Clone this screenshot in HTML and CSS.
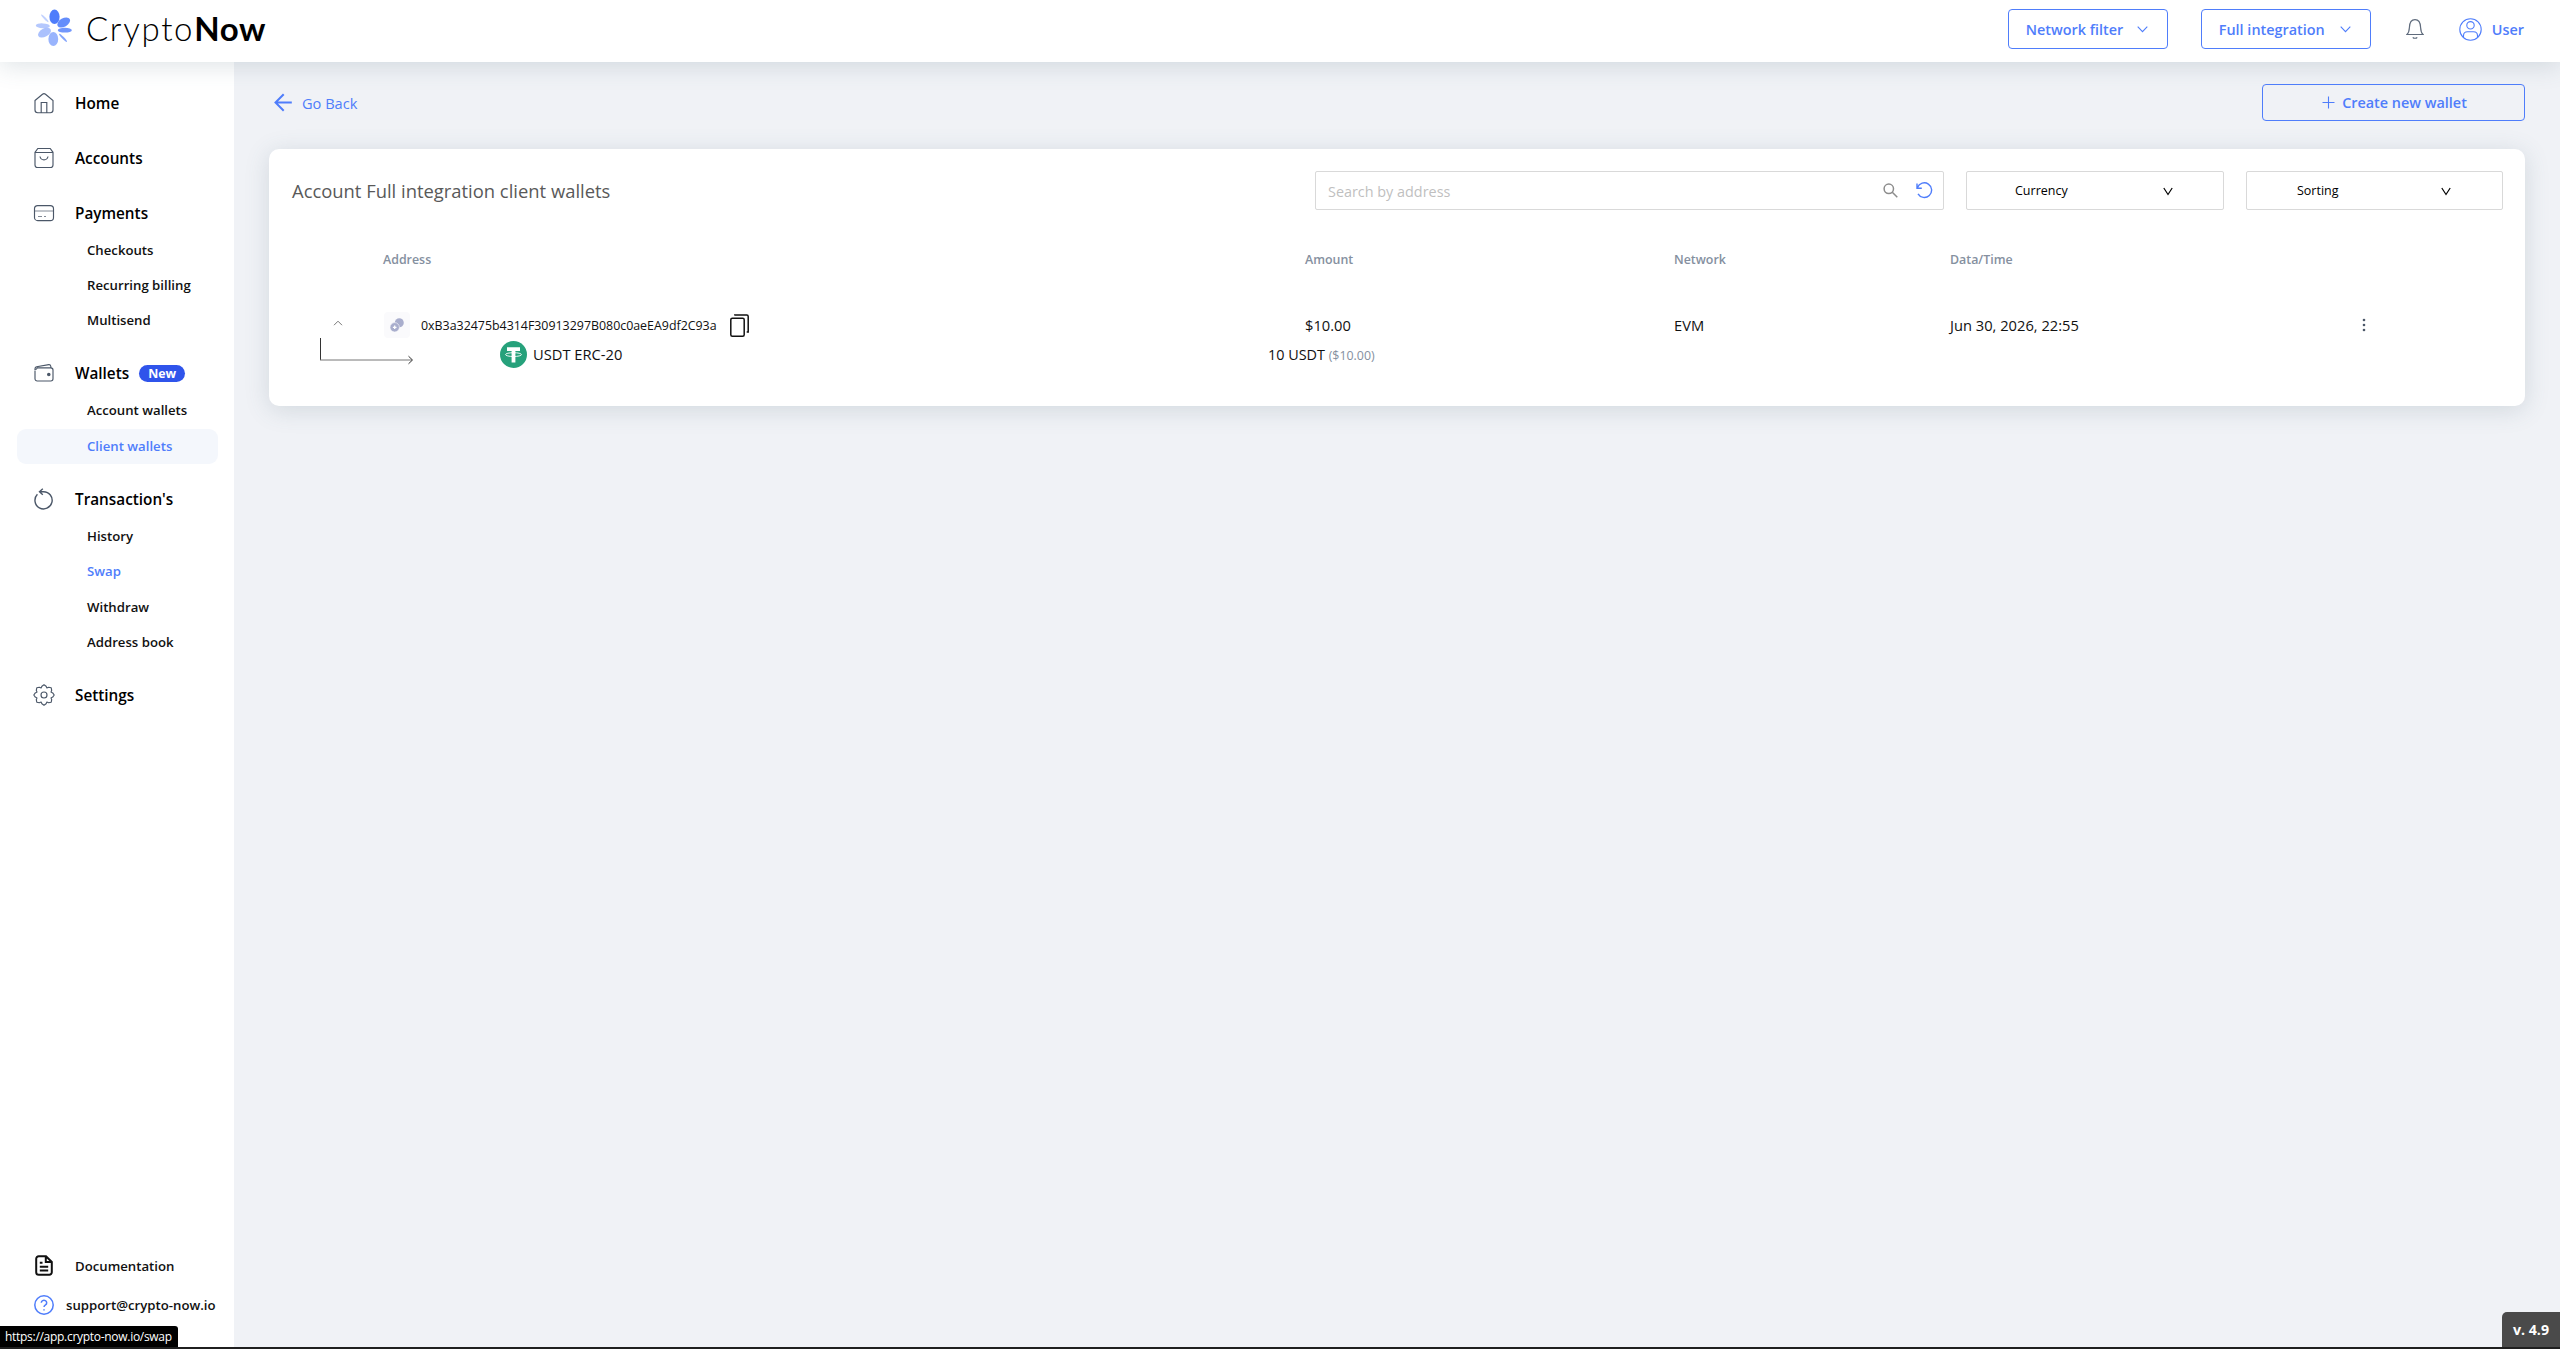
FILE: index.html
```
<!DOCTYPE html>
<html lang="en">
<head>
  <meta charset="UTF-8" />
  <meta name="viewport" content="width=device-width, initial-scale=1.0"/>
  <title>CryptoNow - Client wallets</title>
  <link rel="stylesheet" href="styles.css">
</head>
<body>
  <header class="header">
    <a class="logo" href="#">
      <svg class="logo-icon" width="38" height="38" viewBox="0 0 38 38">
        <g fill="#4f7dfb">
          <ellipse cx="19.5" cy="7.8" rx="5.1" ry="7.2"/>
          <ellipse cx="28.7" cy="13.5" rx="7" ry="4.2" transform="rotate(-30 28.7 13.5)" opacity=".88"/>
          <ellipse cx="29.8" cy="21.2" rx="7" ry="2.4" opacity=".8"/>
          <ellipse cx="28" cy="28.8" rx="5.6" ry="1" transform="rotate(46 28 28.8)" opacity=".7"/>
          <ellipse cx="18.3" cy="30" rx="4.9" ry="7.1" opacity=".58"/>
          <ellipse cx="9.5" cy="23.7" rx="7" ry="4.1" transform="rotate(-28 9.5 23.7)" opacity=".48"/>
          <ellipse cx="7.8" cy="16.8" rx="7" ry="2.4" transform="rotate(3 7.8 16.8)" opacity=".42"/>
          <ellipse cx="9.8" cy="9.3" rx="5.2" ry="1" transform="rotate(46 9.8 9.3)" opacity=".35"/>
        </g>
      </svg>
      <span class="logo-text">Crypto<b>Now</b></span>
    </a>
    <div class="header-actions">
      <button class="btn network-filter">Network filter
        <svg width="11" height="7" viewBox="0 0 11 7"><path d="M.7.7 5.5 5.6 10.3.7"/></svg>
      </button>
      <button class="btn integration">Full integration
        <svg width="11" height="7" viewBox="0 0 11 7"><path d="M.7.7 5.5 5.6 10.3.7"/></svg>
      </button>
      <svg class="bell" width="18" height="21" viewBox="0 0 18 21">
        <path d="M1 15.5c1.8-1.7 2.2-3.2 2.4-7C3.6 3.3 5.6.7 9 .7s5.4 2.6 5.6 7.8c.2 3.8.6 5.3 2.4 7zM6.800 18.300a2.400 1.600 0 0 0 4.400 0"/>
      </svg>
      <a class="user" href="#">
        <svg width="23" height="23" viewBox="0 0 23 23">
          <circle cx="11.5" cy="11.5" r="10.7"/>
          <circle cx="11.5" cy="7.3" r="3.7"/>
          <path d="M4.5 19.3v-1.500c0-2.400 1.700-4 4-4h6c2.300 0 4 1.600 4 4v1.500"/>
        </svg>
        User
      </a>
    </div>
  </header>

  <div class="layout">
    <aside class="sidebar">
      <nav class="menu">
        <a class="menu-item" href="#">
          <svg width="22" height="22" viewBox="0 0 22 22"><path d="M2 8.500 9.500 2.200a2.300 2.300 0 0 1 3 0L20 8.500V18a2.700 2.700 0 0 1-2.700 2.700H4.700A2.700 2.700 0 0 1 2 18zM8.200 20.500v-10h5.600v10"/></svg>
          Home
        </a>
        <a class="menu-item" href="#">
          <svg width="22" height="22" viewBox="0 0 22 22"><path d="M2 5.300 4.800 1.500h12.400L20 5.300V18a2.500 2.500 0 0 1-2.500 2.500h-13A2.500 2.500 0 0 1 2 18zM2 5.500h18M7 9.500c.5 2.300 2 3.300 4 3.300s3.500-1 4-3.300"/></svg>
          Accounts
        </a>
        <a class="menu-item" href="#">
          <svg width="22" height="22" viewBox="0 0 22 22"><rect x="1.5" y="3.6" width="19" height="15" rx="3.2"/><path d="M1.500 9h19" opacity=".6"/><path d="M5 14.500h4m2 0h2" opacity=".7"/></svg>
          Payments
        </a>
        <a class="sub-item" href="#">Checkouts</a>
        <a class="sub-item" href="#">Recurring billing</a>
        <a class="sub-item" href="#">Multisend</a>
        <a class="menu-item" href="#">
          <svg width="22" height="22" viewBox="0 0 22 22"><path d="M2 8.500v8.300a2.200 2.200 0 0 0 2.200 2.200h13.600a2.200 2.200 0 0 0 2.200-2.200V8a2.200 2.200 0 0 0-2.200-2.200H4.200A2.200 2.200 0 0 1 2 7.500v-.8c0-1 .6-1.700 1.600-1.900L15.800 2.600c1-.1 1.700.3 1.900 1.400l.3 1.700"/><circle cx="15.8" cy="12.5" r="1.2" fill="#4b5768"/></svg>
          Wallets
          <span class="badge">New</span>
        </a>
        <a class="sub-item" href="#">Account wallets</a>
        <a class="sub-item current" href="#">Client wallets</a>
        <a class="menu-item" href="#">
          <svg width="22" height="22" viewBox="0 0 22 22"><path d="M4.400 6.300A8.600 8.600 0 1 0 10.500 3.700H6.800M9.800.8 6.500 3.700l3.300 3" stroke-width="1.4"/></svg>
          Transaction's
        </a>
        <a class="sub-item" href="#">History</a>
        <a class="sub-item hovered" href="#">Swap</a>
        <a class="sub-item" href="#">Withdraw</a>
        <a class="sub-item" href="#">Address book</a>
        <a class="menu-item" href="#">
          <svg width="22" height="22" viewBox="0 0 22 22"><path d="M11 .8 13.100 2.300 13.900 4 15.700 3.300 18.200 3.800 18.700 6.300 18 8.100 19.700 8.900 21.200 11 19.700 13.100 18 13.900 18.700 15.700 18.200 18.200 15.700 18.700 13.900 18 13.100 19.700 11 21.200 8.900 19.700 8.100 18 6.300 18.700 3.800 18.200 3.300 15.700 4 13.900 2.300 13.100.8 11 2.300 8.900 4 8.100 3.300 6.300 3.800 3.800 6.300 3.300 8.100 4 8.900 2.300z" stroke-linejoin="round"/><circle cx="11" cy="11" r="3"/></svg>
          Settings
        </a>
      </nav>
      <div class="sidebar-footer">
        <a class="docs" href="#">
          <svg width="18" height="21" viewBox="0 0 18 21"><path d="M11 1.200H3.700A2.500 2.500 0 0 0 1.200 3.700v13.600a2.500 2.500 0 0 0 2.500 2.500h10.600a2.500 2.500 0 0 0 2.500-2.500V7zM10.800 1.500V7h5.700M4.800 7.800h2.700M4.800 11.700h8.400M4.800 15.500h8.400"/></svg>
          Documentation
        </a>
        <a class="support" href="#">
          <svg width="20" height="20" viewBox="0 0 20 20"><circle cx="10" cy="10" r="9.2"/><path d="M7.300 7.700a2.700 2.500 0 1 1 4.200 2.200c-1 .6-1.500 1-1.500 2.100M10 14.200v1.200"/></svg>
          support@crypto-now.io
        </a>
      </div>
    </aside>

    <main class="content">
      <div class="toolbar">
        <a class="go-back" href="#">
          <svg width="19" height="19" viewBox="0 0 19 19"><path d="M9.700 1.200 1.500 9.500l8.200 8.300M1.500 9.500h16.300"/></svg>
          Go Back
        </a>
        <button class="btn create-wallet">
          <svg width="13" height="13" viewBox="0 0 13 13"><path d="M6.500.5v12M.5 6.500h12"/></svg>
          Create new wallet
        </button>
      </div>

      <section class="card">
        <div class="card-head">
          <h1>Account Full integration client wallets</h1>
          <div class="search">
            <input type="text" placeholder="Search by address" />
            <svg class="magnifier" width="15" height="15" viewBox="0 0 15 15"><circle cx="5.8" cy="5.8" r="4.7"/><path d="m9.300 9.300 5 5"/></svg>
            <svg class="reset" width="18" height="17" viewBox="0 0 18 17"><path d="M1.500 5.500A7.300 7.300 0 1 1 2 11.800M1 1.500v4.700h4.800"/></svg>
          </div>
          <div class="select currency">Currency
            <svg width="10" height="9" viewBox="0 0 10 9"><path d="M.8 1 5 7.500 9.200 1"/></svg>
          </div>
          <div class="select sorting">Sorting
            <svg width="10" height="9" viewBox="0 0 10 9"><path d="M.8 1 5 7.500 9.200 1"/></svg>
          </div>
        </div>

        <div class="row table-head">
          <span class="col-address">Address</span>
          <span>Amount</span>
          <span>Network</span>
          <span>Data/Time</span>
        </div>

        <div class="row wallet">
          <svg class="caret" width="10" height="6" viewBox="0 0 10 6"><path d="M1 5.200 5 1.200l4 4"/></svg>
          <div class="address">
            <span class="link">
              <svg width="14" height="14" viewBox="0 0 14 14">
                <circle cx="9.3" cy="4.7" r="4.5" fill="#a9aecd"/>
                <circle cx="4.7" cy="9.3" r="4.7" fill="#a9aecd" stroke="#fafafc" stroke-width=".6"/>
                <path d="M4.700 7.500v3.600M2.900 9.300h3.600" stroke="#fff" stroke-width="1.3"/>
              </svg>
            </span>
            <span class="hash">0xB3a32475b4314F30913297B080c0aeEA9df2C93a</span>
            <svg class="copy" width="19" height="23" viewBox="0 0 19 23"><rect x=".8" y="4.3" width="13.4" height="17.9" rx="1.5"/><path d="M4.800 1.500V1h12a1.400 1.400 0 0 1 1.400 1.400v15.500h-1.500"/></svg>
          </div>
          <span>$10.00</span>
          <span>EVM</span>
          <span>Jun 30, 2026, 22:55</span>
          <svg class="dots" width="4" height="14" viewBox="0 0 4 14"><circle cx="2" cy="2" r="1.3"/><circle cx="2" cy="7" r="1.3"/><circle cx="2" cy="12" r="1.3"/></svg>
        </div>

        <div class="token">
          <svg class="elbow" width="95" height="27" viewBox="0 0 95 27">
            <path d="M1.500 0v22" stroke="#333"/>
            <path d="M1 22h92" stroke="#777"/>
            <path d="m89.500 18.200 4 3.800-4 3.800" stroke="#333"/>
          </svg>
          <div class="token-name">
            <svg width="27" height="27" viewBox="0 0 27 27">
              <circle cx="13.5" cy="13.5" r="13.5" fill="#26a17b"/>
              <path fill="#fff" d="M7 6.300h13v3.600h-4.600v11.600h-3.800V9.900H7z"/>
              <ellipse cx="13.5" cy="13.6" rx="8" ry="1.9" fill="none" stroke="#fff" stroke-width=".9"/>
            </svg>
            USDT ERC-20
          </div>
          <div class="token-amount">10 USDT <small>($10.00)</small></div>
        </div>
      </section>
    </main>
  </div>

  <div class="status-url">https://app.crypto-now.io/swap</div>
  <div class="version">v. 4.9</div>
  <div class="bottom-edge"></div>
</body>
</html>
```
FILE: styles.css
```
:root {
  --blue: #4f7dfb;
  --icon: #4b5768;
  --bg: #f0f2f6;
  --border: #d9d9d9;
  --shadow: 0 4px 24px rgba(70, 100, 115, 0.18);
}

* {
  box-sizing: border-box;
}

html, body {
  height: 100%;
  margin: 0;
  overflow: hidden;
}
body {
  display: flex;
  flex-direction: column;
  font-family: "Open Sans", "Noto Sans", sans-serif;
  font-size: 14.7px;
  color: #111;
  background: var(--bg);
}
a {
  color: inherit;
  text-decoration: none;
}
svg {
  display: block;
  flex: none;
  fill: none;
  stroke: currentColor;
}

/* Header */
.header {
  position: relative;
  z-index: 2;
  flex: none;
  display: flex;
  justify-content: space-between;
  height: 62px;
  padding: 0 36px 0 35px;
  background: #fff;
  box-shadow: var(--shadow);
}
.logo {
  display: flex;
  align-items: flex-start;
  gap: 13px;
  color: #000;
}
.logo-icon {
  margin-top: 9px;
  stroke: none;
}
.logo-text {
  margin-top: 8px;
  font: 300 33px/40px Lato, sans-serif;
  letter-spacing: 1.7px;
}
.logo-text b {
  font-weight: 700;
  letter-spacing: 0.6px;
}
.header-actions {
  display: flex;
  align-items: center;
  height: 58px;
  color: var(--blue);
  font-size: 14.4px;
  font-weight: 600;
}

.btn {
  display: flex;
  align-items: center;
  height: 40px;
  padding: 0 19px 0 17px;
  border: 1px solid var(--blue);
  border-radius: 4px;
  background: none;
  color: var(--blue);
  font: 600 14.4px "Open Sans", sans-serif;
}
.btn svg {
  stroke-width: 1.1;
}
.network-filter {
  width: 160px;
  justify-content: space-between;
  margin-right: 33px;
}
.integration {
  width: 170px;
  justify-content: space-between;
}
.bell {
  margin-left: 35px;
  color: #5f6b7c;
  stroke-width: 1.2;
}
.user {
  display: flex;
  align-items: center;
  gap: 10px;
  margin-left: 35px;
}
.user svg {
  stroke-width: 1.1;
}

.layout {
  flex: 1;
  display: flex;
  min-height: 0;
}

/* Sidebar */
.sidebar {
  display: flex;
  flex-direction: column;
  justify-content: space-between;
  width: 234px;
  padding: 21px 16px 21px 17px;
  background: #fff;
  font-weight: 600;
}
.menu-item {
  display: flex;
  align-items: center;
  height: 40px;
  margin-bottom: 14.8px;
  padding-left: 16px;
  font-size: 15.3px;
  color: #000;
}
.menu-item svg {
  margin-right: 20px;
  color: var(--icon);
  stroke-width: 1.15;
}
.menu-item:has(+ .sub-item) {
  margin-bottom: 0;
}
.sub-item {
  display: block;
  height: 35.35px;
  padding-left: 70px;
  border-radius: 9px;
  font-size: 13.2px;
  line-height: 35px;
}
.sub-item + .menu-item {
  margin-top: 14.8px;
}
.sub-item.current {
  background: #f4f7fc;
  color: var(--blue);
}
.sub-item.hovered {
  color: var(--blue);
}
.badge {
  margin-left: 10px;
  padding: 0 9px;
  border-radius: 9px;
  background: #2f54eb;
  color: #fff;
  font-size: 12.4px;
  font-weight: 700;
  line-height: 17px;
}
.sidebar-footer {
  padding-bottom: 4px;
  font-size: 13.2px;
}
.docs,
.support {
  display: flex;
  align-items: center;
  height: 39px;
}
.docs {
  padding-left: 18px;
  gap: 22px;
}
.docs svg {
  stroke-width: 2;
}
.support {
  padding-left: 17px;
  gap: 12px;
}
.support svg {
  color: var(--blue);
  stroke-width: 1.5;
}

/* Content */
.content {
  flex: 1;
  padding: 22px 35px 0;
}
.toolbar {
  display: flex;
  align-items: center;
  justify-content: space-between;
  height: 37px;
}
.go-back {
  display: flex;
  align-items: center;
  gap: 9px;
  padding-left: 5px;
  color: var(--blue);
  font-size: 14.6px;
}
.go-back svg {
  stroke-width: 2;
}
.create-wallet {
  justify-content: center;
  gap: 7px;
  width: 263px;
  height: 37px;
  padding: 0 0 1px 2px;
}

.card {
  height: 257px;
  margin-top: 28px;
  padding: 22px 22px 0 23px;
  border-radius: 10px;
  background: #fff;
  box-shadow: var(--shadow);
}
.card-head {
  display: flex;
  align-items: center;
}
.card-head h1 {
  flex: 1;
  margin: 0;
  color: #595959;
  font-size: 18.4px;
  font-weight: 500;
}
.search {
  display: flex;
  align-items: center;
  width: 629px;
  height: 39px;
  padding: 0 9px 0 12px;
  border: 1px solid var(--border);
  border-radius: 2px;
}
.search input {
  flex: 1;
  min-width: 0;
  padding: 1px 0 0;
  border: 0;
  outline: none;
  font: 14.4px "Open Sans", sans-serif;
}
.search input::placeholder {
  color: #bfbfbf;
}
.magnifier {
  margin-right: 18px;
  color: #8c8c8c;
  stroke-width: 1.5;
}
.reset {
  color: var(--blue);
  stroke-width: 1.4;
}
.select {
  display: flex;
  align-items: center;
  justify-content: space-between;
  width: 258px;
  height: 39px;
  margin-left: 22px;
  padding: 0 50px 0 48px;
  border: 1px solid var(--border);
  border-radius: 2px;
  color: #000;
  font-size: 12.5px;
}
.select svg {
  margin-top: 2px;
  stroke-width: 1.2;
}
.select.sorting {
  width: 257px;
  padding: 0 51px 0 50px;
}

/* Table */
.row {
  display: grid;
  grid-template-columns: 91px 922px 369px 276px 412px 1fr;
  align-items: center;
}
.table-head {
  height: 26px;
  margin-top: 36px;
  color: #8590a0;
  font-size: 12.4px;
  font-weight: 600;
}
.col-address {
  grid-column: 2;
}
.wallet {
  height: 30px;
  margin-top: 38px;
}
.caret {
  margin: -4px 0 0 41px;
  color: #777;
}
.address {
  display: flex;
  align-items: center;
}
.link {
  display: grid;
  place-items: center;
  width: 26px;
  height: 26px;
  margin-left: 1px;
  border-radius: 4px;
  background: #fafafc;
}
.link svg {
  stroke: none;
}
.hash {
  margin: 0 13px 0 11px;
  font-size: 12.4px;
}
.copy {
  stroke-width: 1.5;
}
.dots {
  fill: #4b5768;
  stroke: none;
}
.token {
  display: flex;
  align-items: center;
  height: 28px;
}
.elbow {
  margin: -6px 0 0 27px;
}
.token-name {
  display: flex;
  align-items: center;
  gap: 6px;
  width: 768px;
  margin-left: 86px;
}
.token-name svg {
  stroke: none;
}
.token-amount {
  font-size: 14.4px;
}
.token-amount small {
  font-size: 12.4px;
  color: #8590a0;
}

/* Fixed to the window edges */
.status-url {
  position: absolute;
  z-index: 3;
  left: 0;
  bottom: 2px;
  height: 21px;
  padding: 0 6px 0 5px;
  border-radius: 0 3px 0 0;
  background: #000;
  color: #fff;
  font-size: 12px;
  letter-spacing: -0.29px;
  line-height: 21px;
}
.version {
  position: absolute;
  right: 0;
  bottom: 2px;
  width: 58px;
  height: 35px;
  border-radius: 5px 0 0 0;
  background: #4a4a4a;
  color: #fff;
  font-size: 14.2px;
  font-weight: 700;
  line-height: 35px;
  text-align: center;
}
.bottom-edge {
  position: absolute;
  left: 0;
  right: 0;
  bottom: 0;
  height: 2px;
  background: #1f1f1f;
}
```
